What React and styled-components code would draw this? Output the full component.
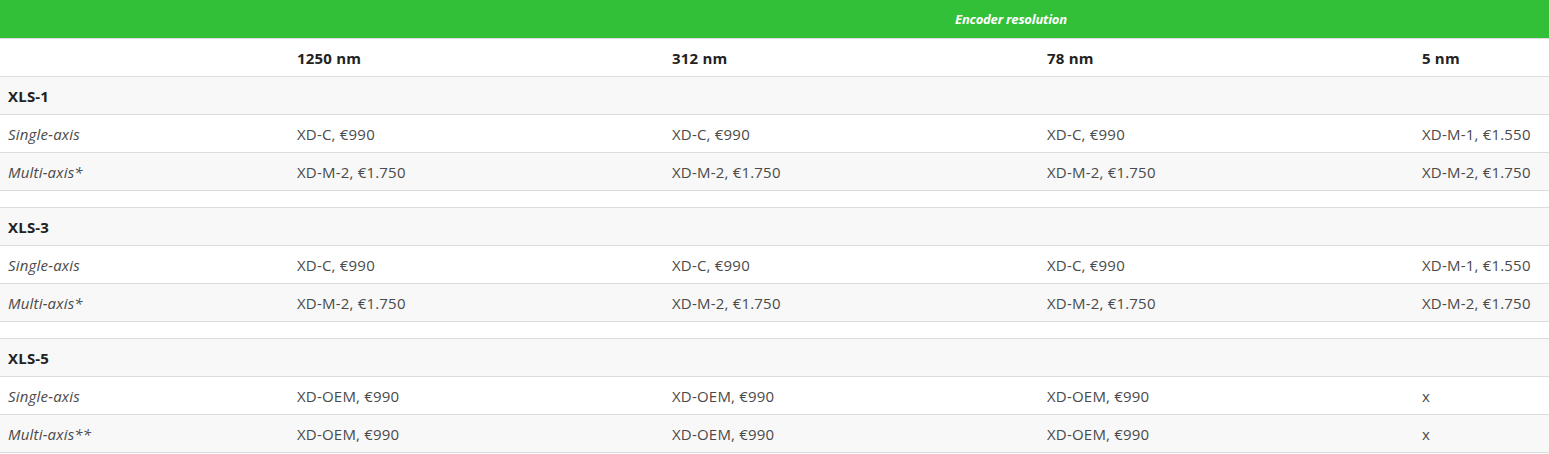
import { createGlobalStyle, styled } from 'styled-components';

const GlobalStyle = createGlobalStyle`
	body {
		margin: 0;
		background: #fff;
		font-family: 'Open Sans', 'Noto Sans', sans-serif;
	}
`;

const columns = ['1250 nm', '312 nm', '78 nm', '5 nm'];

const groups = [
	{
		name: 'XLS-1',
		rows: [
			['Single-axis', 'XD-C, €990', 'XD-C, €990', 'XD-C, €990', 'XD-M-1, €1.550'],
			['Multi-axis*', 'XD-M-2, €1.750', 'XD-M-2, €1.750', 'XD-M-2, €1.750', 'XD-M-2, €1.750'],
		],
	},
	{
		name: 'XLS-3',
		rows: [
			['Single-axis', 'XD-C, €990', 'XD-C, €990', 'XD-C, €990', 'XD-M-1, €1.550'],
			['Multi-axis*', 'XD-M-2, €1.750', 'XD-M-2, €1.750', 'XD-M-2, €1.750', 'XD-M-2, €1.750'],
		],
	},
	{
		name: 'XLS-5',
		rows: [
			['Single-axis', 'XD-OEM, €990', 'XD-OEM, €990', 'XD-OEM, €990', 'x'],
			['Multi-axis**', 'XD-OEM, €990', 'XD-OEM, €990', 'XD-OEM, €990', 'x'],
		],
	},
];

const App = () => {
	return (
		<>
			<GlobalStyle />
			<Table>
				<colgroup>
					<col style={{ width: 289 }} />
					<col style={{ width: 375 }} />
					<col style={{ width: 375 }} />
					<col style={{ width: 375 }} />
					<col />
				</colgroup>
				<thead>
					<BannerRow>
						<BannerCell colSpan={5}>Encoder resolution</BannerCell>
					</BannerRow>
					<HeadRow>
						<HeadCell />
						{columns.map((c) => (
							<HeadCell key={c}>{c}</HeadCell>
						))}
					</HeadRow>
				</thead>
				<tbody>
					{groups.map((group, gi) => [
						gi > 0 && (
							<Row key={`gap-${gi}`}>
								<Spacer colSpan={5} />
							</Row>
						),
						<Row key={group.name}>
							<GroupCell colSpan={5}>{group.name}</GroupCell>
						</Row>,
						...group.rows.map((r, ri) => (
							<Row key={`${group.name}-${ri}`}>
								<LabelCell>{r[0]}</LabelCell>
								{r.slice(1).map((v, vi) => (
									<Cell key={vi}>{v}</Cell>
								))}
							</Row>
						)),
					])}
				</tbody>
			</Table>
		</>
	);
};

const Table = styled.table`
	width: 1549px;
	border-collapse: collapse;
	table-layout: fixed;
	font-size: 15px;
	letter-spacing: 0.2px;
	color: #4a4a4a;
`;

const BannerRow = styled.tr`
	background: #31c037;
	border-bottom: 1px solid #dcdcdc;
`;

const BannerCell = styled.th`
	height: 38px;
	padding: 0 0 0 473px;
	color: #fff;
	font-style: italic;
	font-weight: 700;
	font-size: 13px;
	text-align: center;
	letter-spacing: -0.2px;
`;

const HeadRow = styled.tr`
	background: #fff;
	border-bottom: 1px solid #dcdcdc;
`;

const HeadCell = styled.th`
	height: 37px;
	padding: 0 8px;
	text-align: left;
	font-weight: 700;
	color: #222;
`;

const Row = styled.tr`
	border-bottom: 1px solid #dcdcdc;

	&:nth-child(odd) {
		background: #f8f8f8;
	}
`;

const Spacer = styled.td`
	height: 16px;
	padding: 0;
`;

const GroupCell = styled.td`
	height: 37px;
	padding: 0 8px;
	font-weight: 700;
	color: #222;
`;

const LabelCell = styled.td`
	height: 37px;
	padding: 0 8px;
	font-style: italic;
`;

const Cell = styled.td`
	height: 37px;
	padding: 0 8px;
`;

export default App;
